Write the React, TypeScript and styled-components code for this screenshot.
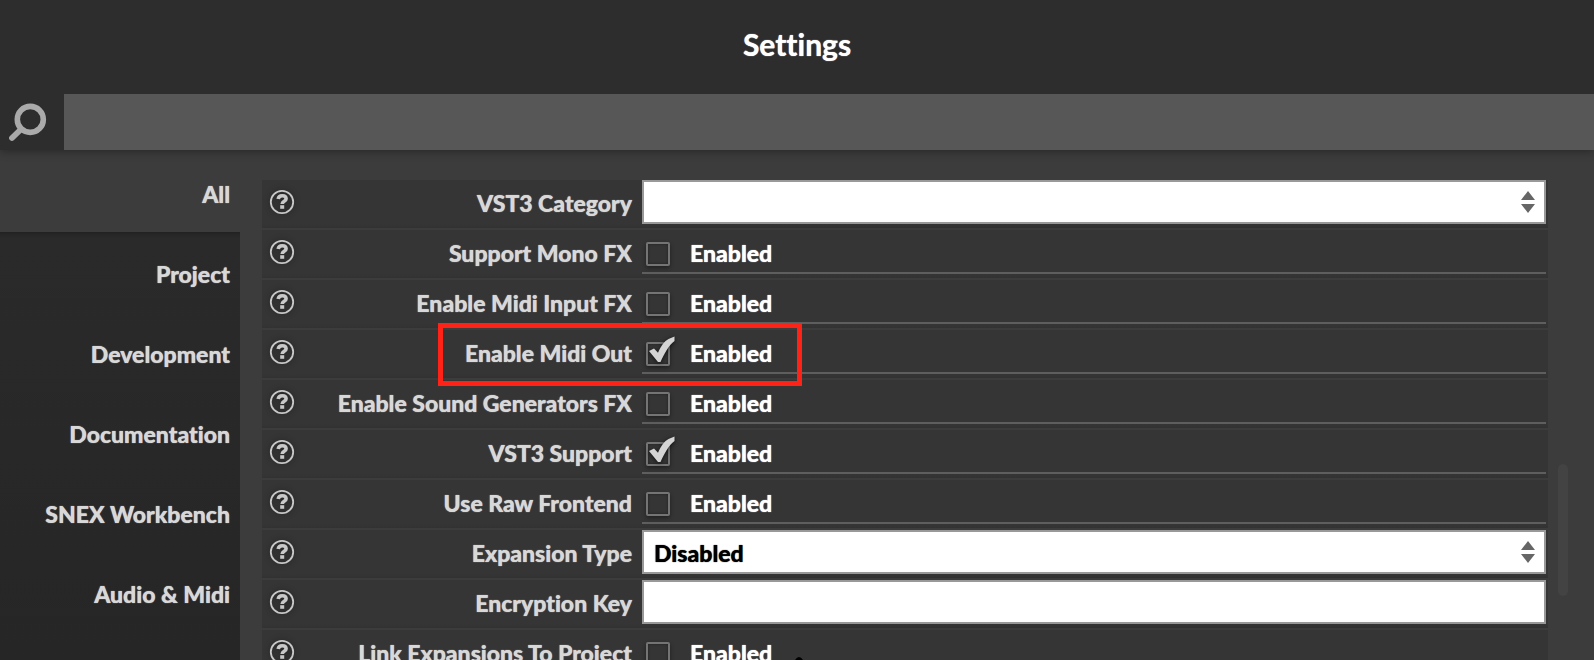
import React, { useId, useState } from 'react';
import styled, { createGlobalStyle, css } from 'styled-components';

const Global = createGlobalStyle`
  *, *::before, *::after { box-sizing: border-box; }
  html, body, #root { height: 100%; }
  body {
    margin: 0;
    overflow: hidden;
    background: #3c3c3c;
    color: #d8d8d8;
    font: 900 23px/32px Lato, "Liberation Sans", sans-serif;
    font-variant-ligatures: none;
    text-shadow: 0 0 1px currentColor;
  }
  button, input, select { font: inherit; text-shadow: inherit; }
`;

const Page = styled.div`
  display: flex;
  flex-direction: column;
  height: 100%;
  overflow: hidden;
`;

const Header = styled.header`
  flex: none;
  background: #2d2d2d;
  box-shadow: 0 0 10px rgba(0, 0, 0, 0.45);
`;

const Title = styled.h1`
  margin: 0;
  padding: 24px 0 30px;
  color: #fff;
  font-size: 30px;
  line-height: 40px;
  text-align: center;
`;

const SearchBar = styled.label`
  display: flex;
  height: 56px;
`;

const SearchIcon = styled.svg`
  flex: none;
  width: 64px;
  height: 56px;
`;

const SearchInput = styled.input`
  flex: 1;
  min-width: 0;
  padding: 0 12px;
  border: 0;
  outline: 0;
  background: #575757;
  color: #fff;
`;

const Body = styled.div`
  display: flex;
  flex: 1;
  min-height: 0;
`;

const Sidebar = styled.nav`
  display: flex;
  flex: none;
  flex-direction: column;
  width: 240px;
  padding-top: 2px;
`;

const NavList = styled.div`
  flex: 1;
  background: linear-gradient(#222, #2a2a2a 6px, #262626);
`;

const NavButton = styled.button`
  display: block;
  width: 100%;
  height: 80px;
  padding: 4px 10px 0 0;
  border: 0;
  background: transparent;
  color: #d8d8d8;
  line-height: 32px;
  text-align: right;
`;

const Content = styled.main`
  display: flex;
  flex: 1;
  min-width: 0;
  gap: 10px;
  padding: 30px 26px 0 22px;
`;

const Rows = styled.div`
  display: flex;
  flex: 1;
  flex-direction: column;
  gap: 2px;
  min-width: 0;
`;

const Row = styled.div`
  display: flex;
  flex: none;
  align-items: flex-start;
  height: 48px;
  padding-right: 2px;
  background: linear-gradient(#353535 44px, #323232);
`;

const HelpButton = styled.button`
  flex: none;
  width: 40px;
  height: 44px;
  padding: 0;
  border: 0;
  background: transparent;
`;

const HelpSvg = styled.svg`
  display: block;
  width: 40px;
  height: 44px;
  filter: drop-shadow(0 0 3px rgba(0, 0, 0, 0.4));
`;

const Name = styled.label`
  flex: none;
  width: 340px;
  padding: 7px 10px 0 0;
  text-align: right;
  white-space: nowrap;
`;

const boxed = css`
  width: 100%;
  height: 44px;
  padding: 2px 10px 0;
  border: 2px solid #999;
  border-radius: 0;
  outline: 0;
  background: #fff;
  color: #000;
`;

const Field = styled.div`
  position: relative;
  flex: 1;
  min-width: 0;
`;

const Select = styled.select`
  ${boxed}
  appearance: none;
`;

const TextInput = styled.input`
  ${boxed}
`;

const Arrows = styled.svg`
  position: absolute;
  top: 11px;
  right: 11px;
  width: 14px;
  height: 22px;
  pointer-events: none;
`;

const Toggle = styled.label`
  display: flex;
  flex: 1;
  gap: 8px;
  height: 44px;
  border-bottom: 2px solid #5e5e5e;
  color: #fff;
`;

const CheckArea = styled.span`
  position: relative;
  flex: none;
  width: 40px;
`;

const CheckInput = styled.input`
  appearance: none;
  display: block;
  width: 24px;
  height: 24px;
  margin: 12px 0 0 4px;
  border: 2px solid #747474;
  border-radius: 2px;
  box-shadow: 0 2px 4px rgba(0, 0, 0, 0.4), inset 0 0 3px rgba(0, 0, 0, 0.4);
`;

const Tick = styled.svg`
  position: absolute;
  top: 4px;
  left: 4px;
  width: 32px;
  height: 32px;
  pointer-events: none;
  filter: drop-shadow(0 1px 2px rgba(0, 0, 0, 0.7));
`;

const ToggleText = styled.span`
  padding-top: 7px;
`;

const Scrollbar = styled.div`
  flex: none;
  width: 10px;
  height: 132px;
  margin-top: 284px;
  border-radius: 5px;
  background: #434343;
`;

const Highlight = styled.div`
  position: absolute;
  top: 323px;
  left: 438px;
  width: 364px;
  height: 63px;
  border: 5px solid #ff2216;
  pointer-events: none;
`;

const Pointer = styled.svg`
  position: absolute;
  top: 656px;
  left: 794px;
  width: 10px;
  height: 4px;
  pointer-events: none;
`;

type Kind = 'select' | 'toggle' | 'text';
interface Setting {
  name: string;
  kind: Kind;
  value?: string;
  on?: boolean;
}

const categories = ['Project', 'Development', 'Documentation', 'SNEX Workbench', 'Audio & Midi'];

const settings: Setting[] = [
  { name: 'VST3 Category', kind: 'select', value: '' },
  { name: 'Support Mono FX', kind: 'toggle' },
  { name: 'Enable Midi Input FX', kind: 'toggle' },
  { name: 'Enable Midi Out', kind: 'toggle', on: true },
  { name: 'Enable Sound Generators FX', kind: 'toggle' },
  { name: 'VST3 Support', kind: 'toggle', on: true },
  { name: 'Use Raw Frontend', kind: 'toggle' },
  { name: 'Expansion Type', kind: 'select', value: 'Disabled' },
  { name: 'Encryption Key', kind: 'text' },
  { name: 'Link Expansions To Project', kind: 'toggle' },
];

function HelpIcon() {
  return (
    <HelpSvg viewBox="0 0 40 44" fill="none" stroke="#c8c8c8" aria-hidden="true">
      <circle cx="20" cy="22" r="11.2" strokeWidth="1.8" />
      <path d="M16.2 19c.3-2.4 1.9-3.3 4-3.3 2.3 0 3.9 1 3.9 3 0 2.8-3.9 2.5-3.9 5.3" strokeWidth="3.6" />
      <path d="M20.2 25.2v3.6" strokeWidth="4" />
    </HelpSvg>
  );
}

function ToggleControl({ id, initial }: { id: string; initial: boolean }) {
  const [on, setOn] = useState(initial);
  return (
    <Toggle>
      <CheckArea>
        <CheckInput id={id} type="checkbox" checked={on} onChange={() => setOn(!on)} />
        {on && (
          <Tick viewBox="0 0 32 32" aria-hidden="true">
            <path d="M3 17 L8 14.6 L12 18.8 C15 12 18.5 7 22.5 5 L28.5 2.5 V7 C23 11 18 20 14.5 28 H12 Z" fill="#d4d4d4" />
          </Tick>
        )}
      </CheckArea>
      <ToggleText>Enabled</ToggleText>
    </Toggle>
  );
}

function SettingRow({ setting }: { setting: Setting }) {
  const id = useId();
  return (
    <Row>
      <HelpButton type="button" aria-label={`Help: ${setting.name}`}>
        <HelpIcon />
      </HelpButton>
      <Name htmlFor={id}>{setting.name}</Name>
      {setting.kind === 'toggle' && <ToggleControl id={id} initial={!!setting.on} />}
      {setting.kind === 'text' && (
        <Field>
          <TextInput id={id} type="text" />
        </Field>
      )}
      {setting.kind === 'select' && (
        <Field>
          <Select id={id} defaultValue={setting.value}>
            <option>{setting.value}</option>
          </Select>
          <Arrows viewBox="0 0 14 22" fill="#666" aria-hidden="true">
            <path d="M0 9 7 0l7 9ZM0 13h14l-7 9Z" />
          </Arrows>
        </Field>
      )}
    </Row>
  );
}

export default function App() {
  return (
    <>
      <Global />
      <Page>
        <Header>
          <Title>Settings</Title>
          <SearchBar>
            <SearchIcon viewBox="0 0 64 56" fill="none" stroke="#aaa" aria-hidden="true">
              <circle cx="30.3" cy="25.4" r="13" strokeWidth="5.6" />
              <path d="M21 35.2 12 44" strokeWidth="5.8" strokeLinecap="round" />
            </SearchIcon>
            <SearchInput type="text" aria-label="Search settings" />
          </SearchBar>
        </Header>
        <Body>
          <Sidebar>
            <NavButton type="button">All</NavButton>
            <NavList>
              {categories.map((c) => (
                <NavButton type="button" key={c}>{c}</NavButton>
              ))}
            </NavList>
          </Sidebar>
          <Content>
            <Rows>
              {settings.map((s) => (
                <SettingRow key={s.name} setting={s} />
              ))}
            </Rows>
            <Scrollbar />
          </Content>
        </Body>
      </Page>
      <Highlight />
      <Pointer viewBox="0 0 10 4" aria-hidden="true">
        <path d="M1 4 Q5 -2 9 4Z" fill="#000" />
      </Pointer>
    </>
  );
}
